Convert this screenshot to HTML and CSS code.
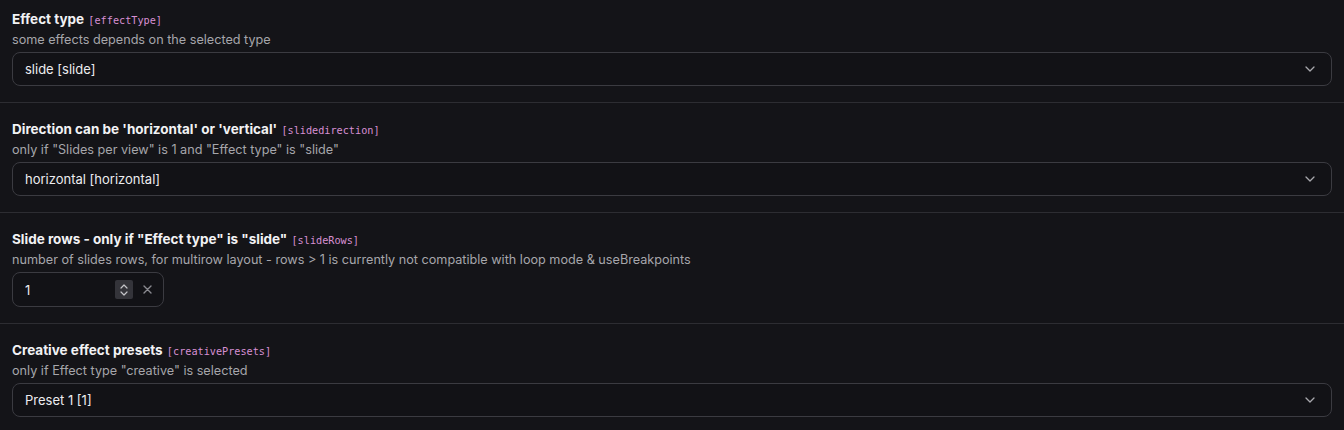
FILE: index.html
```html
<!DOCTYPE html>
<html>
<head>
<meta charset="utf-8">
<link rel="stylesheet" href="styles.css">
</head>
<body>
<div class="form">
  <section class="field">
    <div class="label">Effect type <code class="key">[effectType]</code></div>
    <div class="desc">some effects depends on the selected type</div>
    <div class="select"><span>slide [slide]</span>
      <svg class="chev" width="10" height="6" viewBox="0 0 10 6"><path d="M1 1l4 4 4-4" fill="none" stroke="#a8a8ad" stroke-width="1.3" stroke-linecap="round" stroke-linejoin="round"/></svg>
    </div>
  </section>
  <section class="field">
    <div class="label">Direction can be 'horizontal' or 'vertical' <code class="key">[slidedirection]</code></div>
    <div class="desc">only if "Slides per view" is 1 and "Effect type" is "slide"</div>
    <div class="select"><span>horizontal [horizontal]</span>
      <svg class="chev" width="10" height="6" viewBox="0 0 10 6"><path d="M1 1l4 4 4-4" fill="none" stroke="#a8a8ad" stroke-width="1.3" stroke-linecap="round" stroke-linejoin="round"/></svg>
    </div>
  </section>
  <section class="field">
    <div class="label">Slide rows - only if "Effect type" is "slide" <code class="key">[slideRows]</code></div>
    <div class="desc">number of slides rows, for multirow layout - rows &gt; 1 is currently not compatible with loop mode &amp; useBreakpoints</div>
    <div class="number">
      <span class="num-val">1</span>
      <span class="spin">
        <svg width="10" height="14" viewBox="0 0 10 14"><path d="M2 5l3-3 3 3M2 9l3 3 3-3" fill="none" stroke="#c4c4c8" stroke-width="1.2" stroke-linecap="round" stroke-linejoin="round"/></svg>
      </span>
      <svg class="clear" width="9" height="9" viewBox="0 0 9 9"><path d="M1 1l7 7M8 1l-7 7" stroke="#8a8a90" stroke-width="1.4" stroke-linecap="round"/></svg>
    </div>
  </section>
  <section class="field">
    <div class="label">Creative effect presets <code class="key">[creativePresets]</code></div>
    <div class="desc">only if Effect type "creative" is selected</div>
    <div class="select"><span>Preset 1 [1]</span>
      <svg class="chev" width="10" height="6" viewBox="0 0 10 6"><path d="M1 1l4 4 4-4" fill="none" stroke="#a8a8ad" stroke-width="1.3" stroke-linecap="round" stroke-linejoin="round"/></svg>
    </div>
  </section>
</div>
</body>
</html>
```
FILE: styles.css
```css
html, body {
  margin: 0;
  padding: 0;
  background: #141418;
}
body {
  font-family: Inter, "Noto Sans", "Liberation Sans", sans-serif;
  font-size: 13px;
  color: #ececef;
}
.form {
  display: flex;
  flex-direction: column;
}
.field {
  padding: 10px 12px 16px 12px;
  border-bottom: 1px solid #2d2d32;
}
.field + .field {
  padding-top: 17px;
}
.label {
  font-weight: 700;
  font-size: 13.5px;
  line-height: 18px;
  height: 18px;
  color: #f2f2f4;
}
.key {
  font-family: "DejaVu Sans Mono", "Liberation Mono", monospace;
  font-weight: 400;
  font-size: 10.2px;
  line-height: 1;
  color: #d790d3;
  margin-left: 1px;
}
.desc {
  margin-top: 3px;
  font-size: 12.65px;
  line-height: 18px;
  height: 18px;
  color: #a6a6ab;
}
.select {
  margin-top: 3px;
  height: 34px;
  box-sizing: border-box;
  border: 1px solid #3b3b41;
  border-radius: 8px;
  background: #121216;
  display: flex;
  align-items: center;
  justify-content: space-between;
  padding: 0 16px 0 12px;
  color: #ececef;
}
.number {
  margin-top: 3px;
  width: 152px;
  height: 35px;
  box-sizing: border-box;
  border: 1px solid #3b3b41;
  border-radius: 8px;
  background: #121216;
  display: flex;
  align-items: center;
  padding: 0 11px 0 12px;
}
.num-val {
  flex: 1;
}
.spin {
  width: 18px;
  height: 19px;
  background: #34343a;
  border-radius: 2px;
  display: flex;
  align-items: center;
  justify-content: center;
}
.clear {
  margin-left: 10px;
}
```
